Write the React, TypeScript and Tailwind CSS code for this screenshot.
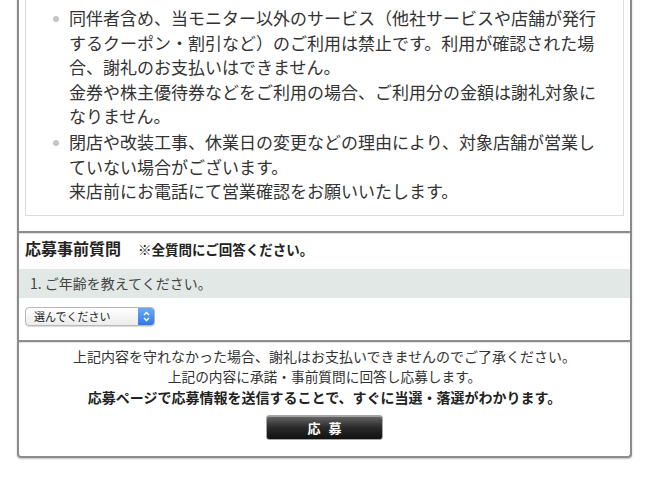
const jp = { fontFamily: '"Noto Sans CJK JP", "Noto Sans", sans-serif' };

const Bullet = ({ children }: { children: React.ReactNode }) => (
  <li className="relative pl-[27px]">
    <span className="absolute left-[11px] top-[10px] h-[6px] w-[6px] rounded-full bg-[#c4c4c4]"></span>
    {children}
  </li>
);

const App = () => {
  return (
    <div className="h-[481px] w-[650px] overflow-hidden bg-white text-[#333]" style={jp}>
      <div className="-mt-[12px] ml-[17px] w-[615px] rounded-b-[4px] border-x-2 border-b-2 border-[#8c8c8c] shadow-[0_1px_2px_rgba(0,0,0,0.25)]">
        {/* Notice box */}
        <div className="mx-[6px] mb-[15px] border border-[#dcdcdc] pb-[11px] pt-[17px]">
          <ul className="w-[570px] pl-[16px] text-[17px] leading-[24.6px]">
            <Bullet>
              同伴者含め、当モニター以外のサービス（他社サービスや店舗が発行
              <br />
              するクーポン・割引など）のご利用は禁止です。利用が確認された場
              <br />
              合、謝礼のお支払いはできません。
              <br />
              金券や株主優待券などをご利用の場合、ご利用分の金額は謝礼対象に
              <br />
              なりません。
            </Bullet>
            <li className="h-[1px]"></li>
            <Bullet>
              閉店や改装工事、休業日の変更などの理由により、対象店舗が営業し
              <br />
              ていない場合がございます。
              <br />
              来店前にお電話にて営業確認をお願いいたします。
            </Bullet>
          </ul>
        </div>

        {/* Questions */}
        <div className="border-t-2 border-[#8c8c8c] shadow-[inset_0_1px_1px_rgba(0,0,0,0.12)]">
          <div className="flex items-baseline gap-[17px] pl-[6px] pt-[4px] pb-[9px]">
            <span className="text-[16px] font-bold leading-[22px] text-[#222]">応募事前質問</span>
            <span className="text-[13.5px] font-bold leading-[22px] text-[#222]">※全質問にご回答ください。</span>
          </div>
          <div className="flex h-[29px] items-center bg-[#e2e8e6] pl-[11px] text-[14px] text-[#444]">
            1. ご年齢を教えてください。
          </div>
          <div className="pl-[6px] pt-[9px] pb-[14px]">
            <div className="flex h-[19px] w-[130px] overflow-hidden rounded-[4px] border border-[#b8b8b8] bg-gradient-to-b from-white to-[#ececec] shadow-[0_1px_1px_rgba(0,0,0,0.15)]">
              <span className="flex-1 pl-[8px] text-[11px] leading-[17px] text-[#222]">選んでください</span>
              <span className="flex w-[16px] flex-col items-center justify-center bg-gradient-to-b from-[#6ea8f5] to-[#2f78e4]">
                <svg width="7" height="11" viewBox="0 0 7 11" fill="none" stroke="white" strokeWidth="1.4">
                  <path d="M1 4 L3.5 1.5 L6 4" />
                  <path d="M1 7 L3.5 9.5 L6 7" />
                </svg>
              </span>
            </div>
          </div>
        </div>

        {/* Submit */}
        <div className="flex flex-col items-center border-t-2 border-[#8c8c8c] pt-[4px] pb-[16px] shadow-[inset_0_1px_1px_rgba(0,0,0,0.12)]">
          <p className="text-[14px] leading-[20.5px]">上記内容を守れなかった場合、謝礼はお支払いできませんのでご了承ください。</p>
          <p className="text-[13.7px] leading-[20.5px]">上記の内容に承諾・事前質問に回答し応募します。</p>
          <p className="text-[14px] font-bold leading-[20.5px] text-[#222]">応募ページで応募情報を送信することで、すぐに当選・落選がわかります。</p>
          <button className="mt-[8px] flex h-[25px] w-[117px] items-center justify-center rounded-[3px] border border-[#a8a8a8] bg-gradient-to-b from-[#6a6a6a] via-[#2a2a2a] to-[#111] text-[13px] font-bold tracking-[8px] text-white shadow-[inset_0_1px_0_rgba(255,255,255,0.4)]">
            <span className="pl-[8px]">応募</span>
          </button>
        </div>
      </div>
    </div>
  );
};

export default App;
